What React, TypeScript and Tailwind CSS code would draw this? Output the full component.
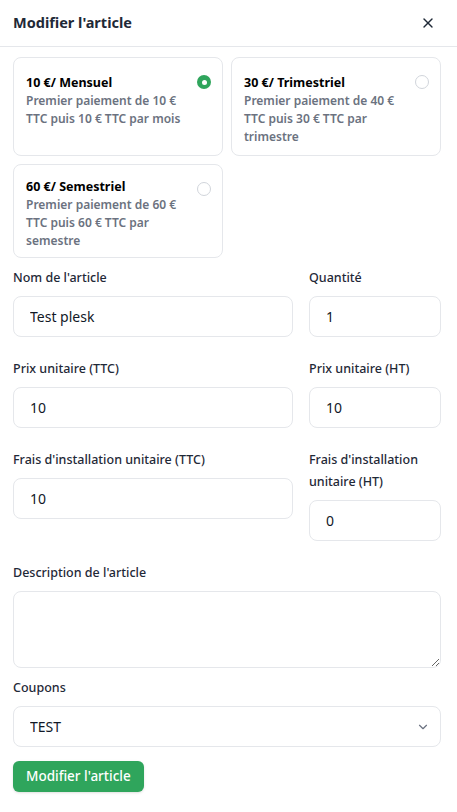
import { X, ChevronDown } from 'lucide-react';

const plans = [
  { title: "10 €/ Mensuel", text: "Premier paiement de 10 € TTC puis 10 € TTC par mois", active: true },
  { title: "30 €/ Trimestriel", text: "Premier paiement de 40 € TTC puis 30 € TTC par trimestre", active: false },
  { title: "60 €/ Semestriel", text: "Premier paiement de 60 € TTC puis 60 € TTC par semestre", active: false }
];

const inputCls =
  "w-full h-[41px] rounded-lg border border-[#e5e7eb] bg-white px-4 text-[14px] text-[#111827] outline-none";

const labelCls = "mb-[7px] text-[12.5px] font-medium leading-[22px] text-[#1f2937]";

function Field({ label, value, span }: { label: string; value: string; span?: boolean }) {
  return (
    <div className={span ? "col-span-2 flex flex-col" : "flex flex-col"}>
      <label className={labelCls}>{label}</label>
      <input className={inputCls} defaultValue={value} />
    </div>
  );
}

export default function App() {
  return (
    <div className="min-h-[812px] w-[457px] bg-white" style={{ fontFamily: '"Noto Sans", sans-serif' }}>
      <div className="flex h-[47px] items-center justify-between border-b border-[#e5e7eb] pl-[13px] pr-[21px]">
        <h1 className="text-[14.5px] font-bold text-[#1f2937]">Modifier l'article</h1>
        <X className="h-4 w-4 text-[#1f2937]" strokeWidth={2} />
      </div>

      <div className="pl-[13px] pr-[16px] pt-[10px]">
        <div className="grid grid-cols-2 gap-2">
          {plans.map((p, i) => (
            <div
              key={p.title}
              className={
                i < 2
                  ? "relative h-[99px] rounded-lg border border-[#e5e7eb] px-3 pt-[16px]"
                  : "relative h-[94px] rounded-lg border border-[#e5e7eb] px-3 pt-[13px]"
              }
            >
              <div className="text-[12.5px] font-bold leading-[18px] text-black">{p.title}</div>
              <div className="pr-4 text-[12px] font-semibold leading-[18px] text-[#6b7280]">{p.text}</div>
              {p.active ? (
                <span className="absolute right-[11px] top-[17px] flex h-[14px] w-[14px] items-center justify-center rounded-full bg-[#2fa55c]">
                  <span className="h-[5px] w-[5px] rounded-full bg-white" />
                </span>
              ) : (
                <span className="absolute right-[11px] top-[17px] h-[14px] w-[14px] rounded-full border border-[#d1d5db]" />
              )}
            </div>
          ))}
        </div>

        <div className="mt-[9px] grid grid-cols-3 gap-x-4 gap-y-[21px]">
          <Field label="Nom de l'article" value="Test plesk" span />
          <Field label="Quantité" value="1" />
          <Field label="Prix unitaire (TTC)" value="10" span />
          <Field label="Prix unitaire (HT)" value="10" />
          <div className="col-span-2 flex flex-col">
            <label className={labelCls}>Frais d'installation unitaire (TTC)</label>
            <input className={inputCls} defaultValue="10" />
          </div>
          <Field label="Frais d'installation unitaire (HT)" value="0" />
        </div>

        <div className="mt-[21px] flex flex-col">
          <label className={labelCls}>Description de l'article</label>
          <textarea className="h-[77px] w-full rounded-lg border border-[#e5e7eb] bg-white px-4 py-2 text-[14px] outline-none" />
        </div>

        <div className="mt-[9px] flex flex-col">
          <label className={labelCls}>Coupons</label>
          <div className="relative">
            <select className={inputCls + " appearance-none"} defaultValue="TEST">
              <option>TEST</option>
            </select>
            <ChevronDown className="pointer-events-none absolute right-[11px] top-[14px] h-[14px] w-[14px] text-[#6b7280]" />
          </div>
        </div>

        <button className="mt-[14px] h-[31px] rounded-md bg-[#2fa55c] px-[13px] text-[13.5px] font-medium text-white shadow-sm">
          Modifier l'article
        </button>
      </div>
    </div>
  );
}
